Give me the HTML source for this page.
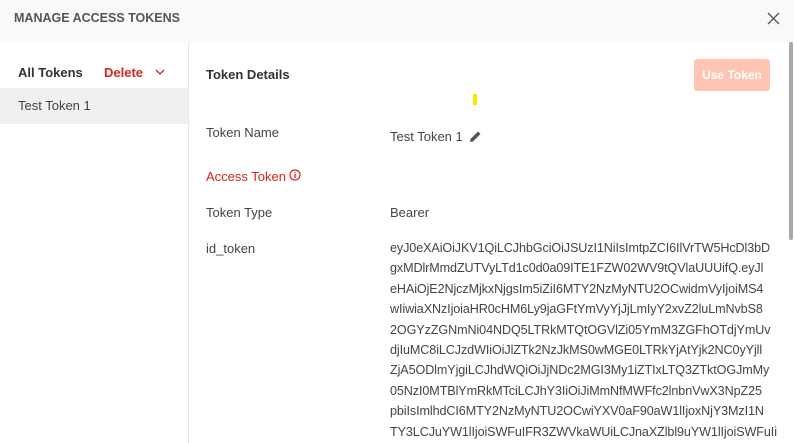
<html style="overflow:hidden;height:443px"><head><style>
html,body{margin:0;width:794px;height:443px;overflow:hidden}
body{background:#fff;font-family:"Liberation Sans",sans-serif;color:#333;position:relative}
.hdr{position:absolute;left:0;top:0;width:794px;height:42px;background:#f9f9f9}
.t{position:absolute;white-space:nowrap;font-size:13px}
.left{position:absolute;left:0;top:42px;width:188px;height:401px;border-right:1px solid #e6e6e6}
.sel{position:absolute;left:0;top:88px;width:188px;height:36px;background:#f0f0f0}
.tok div{height:20.4px;line-height:20.4px;font-size:12.6px;white-space:nowrap;letter-spacing:-0.1px}
</style></head><body>
<div class="hdr"></div>
<div class="t" style="left:14px;top:11px;font-size:12.5px;font-weight:bold;color:#555">MANAGE ACCESS TOKENS</div>
<svg style="position:absolute;left:767px;top:12px" width="13" height="13"><path d="M1 1L12 12M12 1L1 12" stroke="#555" stroke-width="1.3"/></svg>
<div class="left"></div>
<div class="sel"></div>
<div class="t" style="left:18px;top:65px;font-weight:bold">All Tokens</div>
<div class="t" style="left:104px;top:65px;color:#d0271f;font-weight:bold">Delete</div>
<svg style="position:absolute;left:155px;top:69px" width="10" height="7"><path d="M1 1L5 5L9 1" stroke="#d0271f" stroke-width="1.3" fill="none"/></svg>
<div class="t" style="left:18px;top:98px;color:#444">Test Token 1</div>
<div class="t" style="left:206px;top:67px;font-weight:bold">Token Details</div>
<div style="position:absolute;left:694px;top:59px;width:76px;height:32px;background:#ffc4b2;border-radius:3px;color:#fff;font-weight:bold;font-size:12px;text-align:center;line-height:32px">Use Token</div>
<div style="position:absolute;left:473px;top:94px;width:4px;height:11px;background:#ffe600"></div>
<div class="t" style="left:206px;top:125px;color:#444">Token Name</div>
<div class="t" style="left:390px;top:129px;color:#444">Test Token 1</div>
<svg style="position:absolute;left:469px;top:130px" width="13" height="13"><path d="M1 12L1.5 9L9 1.5L11.5 4L4 11.5Z" fill="#555"/></svg>
<div class="t" style="left:206px;top:169px;color:#d0271f">Access Token</div>
<svg style="position:absolute;left:289px;top:169px" width="12" height="12"><circle cx="6" cy="6" r="5" stroke="#d0271f" fill="none" stroke-width="1.2"/><rect x="5.4" y="5" width="1.3" height="4" fill="#d0271f"/><rect x="5.4" y="3" width="1.3" height="1.2" fill="#d0271f"/></svg>
<div class="t" style="left:206px;top:205px;color:#444">Token Type</div>
<div class="t" style="left:390px;top:205px;color:#444">Bearer</div>
<div class="t" style="left:206px;top:241px;color:#444">id_token</div>
<div class="tok" style="position:absolute;left:390px;top:238px;color:#444">
<div>eyJ0eXAiOiJKV1QiLCJhbGciOiJSUzI1NiIsImtpZCI6IlVrTW5HcDl3bD</div>
<div>gxMDlrMmdZUTVyLTd1c0d0a09ITE1FZW02WV9tQVlaUUUifQ.eyJl</div>
<div>eHAiOjE2NjczMjkxNjgsIm5iZiI6MTY2NzMyNTU2OCwidmVyIjoiMS4</div>
<div>wIiwiaXNzIjoiaHR0cHM6Ly9jaGFtYmVyYjJjLmIyY2xvZ2luLmNvbS8</div>
<div>2OGYzZGNmNi04NDQ5LTRkMTQtOGVlZi05YmM3ZGFhOTdjYmUv</div>
<div>djIuMC8iLCJzdWIiOiJlZTk2NzJkMS0wMGE0LTRkYjAtYjk2NC0yYjll</div>
<div>ZjA5ODlmYjgiLCJhdWQiOiJjNDc2MGI3My1iZTIxLTQ3ZTktOGJmMy</div>
<div>05NzI0MTBlYmRkMTciLCJhY3IiOiJiMmNfMWFfc2lnbnVwX3NpZ25</div>
<div>pbiIsImlhdCI6MTY2NzMyNTU2OCwiYXV0aF90aW1lIjoxNjY3MzI1N</div>
<div>TY3LCJuYW1lIjoiSWFuIFR3ZWVkaWUiLCJnaXZlbl9uYW1lIjoiSWFuIi</div>
</div>
<div style="position:absolute;left:789px;top:42px;width:4px;height:198px;background:#a8a8a8;border-radius:2px"></div>
</body></html>
